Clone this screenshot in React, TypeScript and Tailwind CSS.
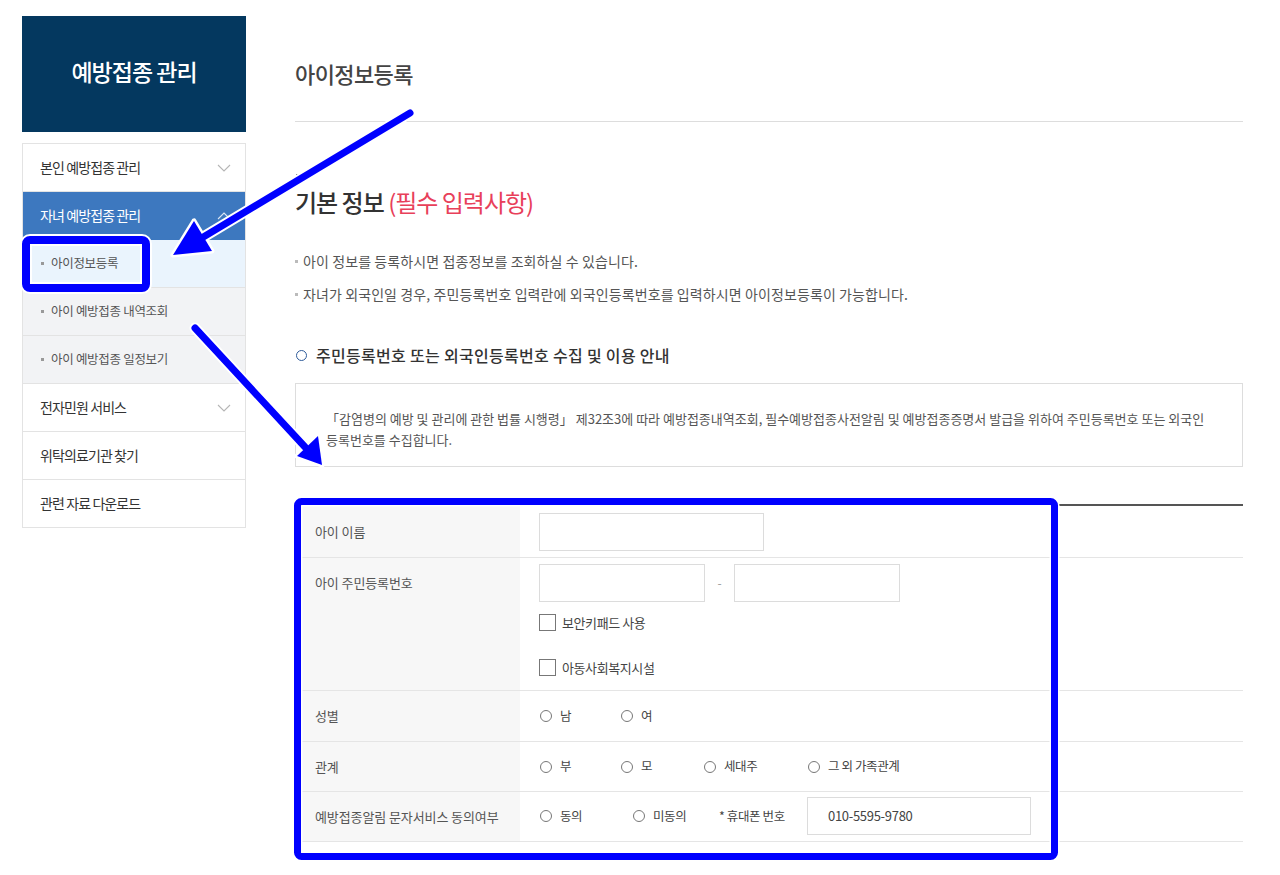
import React from "react";

const font = "font-['Noto_Sans_CJK_KR','Noto_Sans',sans-serif]";

const Chevron = ({ up = false, white = false }: { up?: boolean; white?: boolean }) => (
  <svg width="14" height="8" viewBox="0 0 14 8" className="mr-[14px]">
    <polyline
      points={up ? "1,7 7,1 13,7" : "1,1 7,7 13,1"}
      fill="none"
      stroke={white ? "#dbe6f4" : "#b5b5b5"}
      strokeWidth="1.1"
    />
  </svg>
);

const menu = [
  { label: "본인 예방접종 관리", kind: "main", chevron: "down" },
  { label: "자녀 예방접종 관리", kind: "active", chevron: "up" },
  { label: "아이정보등록", kind: "sub-on" },
  { label: "아이 예방접종 내역조회", kind: "sub" },
  { label: "아이 예방접종 일정보기", kind: "sub" },
  { label: "전자민원 서비스", kind: "main", chevron: "down" },
  { label: "위탁의료기관 찾기", kind: "main" },
  { label: "관련 자료 다운로드", kind: "main" },
];

const Sidebar = () => (
  <aside className="mt-[16px] w-[224px] shrink-0">
    <div className="flex h-[116px] items-center justify-center bg-[#04385f] pb-[5px] text-[23px] font-medium tracking-[-1px] text-white">
      예방접종 관리
    </div>
    <ul className="mt-[11px] border border-[#e3e3e3] border-b-0">
      {menu.map((m) => {
        if (m.kind === "sub" || m.kind === "sub-on") {
          return (
            <li
              key={m.label}
              className={`flex h-[48px] items-center border-b border-[#e3e3e3] pl-[18px] text-[12.5px] tracking-[-0.3px] text-[#555] ${
                m.kind === "sub-on" ? "bg-[#eaf4fd]" : "bg-[#f2f3f5]"
              }`}
            >
              <span className="mr-[7px] inline-block h-[3px] w-[3px] bg-[#999]" />
              {m.label}
            </li>
          );
        }
        const active = m.kind === "active";
        return (
          <li
            key={m.label}
            className={`flex h-[48px] items-center justify-between border-b pl-[17px] text-[14px] tracking-[-0.9px] ${
              active ? "border-[#3d78bf] bg-[#3d78bf] text-white" : "border-[#e3e3e3] bg-white text-[#333]"
            }`}
          >
            <span>{m.label}</span>
            {m.chevron && <Chevron up={m.chevron === "up"} white={active} />}
          </li>
        );
      })}
    </ul>
  </aside>
);

const Radio = ({ label, w }: { label: string; w: string }) => (
  <label className={`flex items-center ${w}`}>
    <span className="inline-block h-[12px] w-[12px] rounded-full border border-[#777] bg-white" />
    <span className="ml-[8px] text-[12.5px] tracking-[-0.4px] text-[#444]">{label}</span>
  </label>
);

const Check = ({ label }: { label: string }) => (
  <label className="flex items-center">
    <span className="inline-block h-[17px] w-[17px] border border-[#777] bg-white" />
    <span className="ml-[6px] text-[13px] tracking-[-0.4px] text-[#444]">{label}</span>
  </label>
);

const Label = ({ children, top = false }: { children: React.ReactNode; top?: boolean }) => (
  <div
    className={`flex bg-[#f7f7f7] pl-[20px] text-[13px] tracking-[-0.1px] text-[#555] ${
      top ? "items-start pt-[15px]" : "items-center"
    }`}
  >
    {children}
  </div>
);

const inputCls = "block h-[38px] border border-[#dcdcdc] bg-white";

const FormTable = () => (
  <div className="mt-[37px] border-t-2 border-[#555]">
    <div className="grid grid-cols-[225px_1fr] border-b border-[#e5e5e5]">
      <Label>아이 이름</Label>
      <div className="pb-[6px] pl-[19px] pt-[7px]">
        <div className={`${inputCls} w-[225px]`} />
      </div>
    </div>
    <div className="grid grid-cols-[225px_1fr] border-b border-[#e5e5e5]">
      <Label top>아이 주민등록번호</Label>
      <div className="pb-[13px] pl-[19px] pt-[6px]">
        <div className="flex items-center">
          <div className={`${inputCls} w-[166px]`} />
          <span className="w-[29px] text-center text-[12px] text-[#999]">-</span>
          <div className={`${inputCls} w-[166px]`} />
        </div>
        <div className="mt-[11px]">
          <Check label="보안키패드 사용" />
        </div>
        <div className="mt-[25px]">
          <Check label="아동사회복지시설" />
        </div>
      </div>
    </div>
    <div className="grid h-[51px] grid-cols-[225px_1fr] border-b border-[#e5e5e5]">
      <Label>성별</Label>
      <div className="flex items-center pl-[20px]">
        <Radio label="남" w="w-[81px]" />
        <Radio label="여" w="w-[81px]" />
      </div>
    </div>
    <div className="grid h-[50px] grid-cols-[225px_1fr] border-b border-[#e5e5e5]">
      <Label>관계</Label>
      <div className="flex items-center pl-[20px]">
        <Radio label="부" w="w-[81px]" />
        <Radio label="모" w="w-[83px]" />
        <Radio label="세대주" w="w-[104px]" />
        <Radio label="그 외 가족관계" w="w-[140px]" />
      </div>
    </div>
    <div className="grid grid-cols-[225px_1fr] border-b border-[#e5e5e5]">
      <Label>예방접종알림 문자서비스 동의여부</Label>
      <div className="flex items-center pb-[6px] pl-[20px] pt-[5px]">
        <Radio label="동의" w="w-[93px]" />
        <Radio label="미동의" w="w-[86px]" />
        <span className="w-[88px] text-[12.5px] tracking-[-0.4px] text-[#444]">* 휴대폰 번호</span>
        <div className={`${inputCls} flex w-[224px] items-center pl-[20px] text-[13px] tracking-[-0.3px] text-[#444]`}>
          010-5595-9780
        </div>
      </div>
    </div>
  </div>
);

const Main = () => (
  <main className="ml-[49px] w-[948px] shrink-0">
    <div className="border-b border-[#ddd] pb-[35px] pt-[60px]">
      <h1 className="text-[22px] font-medium leading-[26px] tracking-[-0.6px] text-[#444]">아이정보등록</h1>
    </div>
    <div className="ml-[1px] mt-[52px] h-[2px] w-[2px] bg-[#777]" />
    <h2 className="mt-[11px] text-[24px] font-medium leading-[30px] tracking-[-1px] text-[#333]">
      기본 정보 <span className="font-normal text-[#e8405a]">(필수 입력사항)</span>
    </h2>
    <ul className="mt-[34px] text-[14px] leading-[20px] tracking-[0.1px] text-[#555]">
      <li className="flex items-center">
        <span className="mr-[5px] inline-block h-[3px] w-[3px] bg-[#bbb]" />
        아이 정보를 등록하시면 접종정보를 조회하실 수 있습니다.
      </li>
      <li className="mt-[13px] flex items-center">
        <span className="mr-[5px] inline-block h-[3px] w-[3px] bg-[#bbb]" />
        자녀가 외국인일 경우, 주민등록번호 입력란에 외국인등록번호를 입력하시면 아이정보등록이 가능합니다.
      </li>
    </ul>
    <h3 className="mt-[40px] flex items-center text-[16px] font-medium leading-[22px] tracking-[0.3px] text-[#333]">
      <span className="mr-[9px] ml-[1px] inline-block h-[11px] w-[11px] rounded-full border-[1.5px] border-[#2e5b9a]" />
      주민등록번호 또는 외국인등록번호 수집 및 이용 안내
    </h3>
    <div className="mt-[17px] border border-[#ddd] pb-[16px] pl-[30px] pr-[20px] pt-[24px] text-[13px] leading-[21px] text-[#555]">
      「감염병의 예방 및 관리에 관한 법률 시행령」 제32조3에 따라 예방접종내역조회, 필수예방접종사전알림 및 예방접종증명서 발급을 위하여 주민등록번호 또는 외국인
      <br />
      등록번호를 수집합니다.
    </div>
    <FormTable />
  </main>
);

const Annotations = () => (
  <svg className="pointer-events-none absolute left-0 top-0" width="1280" height="875" viewBox="0 0 1280 875">
    {/* sidebar highlight */}
    <rect x="26" y="240" width="120" height="48" rx="4" fill="none" stroke="#fff" strokeWidth="12" />
    <rect x="26" y="240" width="120" height="48" rx="4" fill="none" stroke="#0000ff" strokeWidth="8" />
    {/* form highlight */}
    <rect x="297.5" y="501.5" width="757" height="355" rx="4" fill="none" stroke="#fff" strokeWidth="10" />
    <rect x="297.5" y="501.5" width="757" height="355" rx="4" fill="none" stroke="#0000ff" strokeWidth="7" />
    {/* arrow 1 */}
    <line x1="410" y1="113" x2="200" y2="239" stroke="#fff" strokeWidth="11" strokeLinecap="round" />
    <polygon points="173,255 212,251 194,221" fill="#fff" stroke="#fff" strokeWidth="5" strokeLinejoin="round" />
    <line x1="410" y1="113" x2="200" y2="239" stroke="#0000ff" strokeWidth="7" strokeLinecap="round" />
    <polygon points="173,255 212,251 194,221" fill="#0000ff" />
    {/* arrow 2 */}
    <line x1="195" y1="328" x2="305" y2="447" stroke="#fff" strokeWidth="11" strokeLinecap="round" />
    <polygon points="322,465 297,456 318,436" fill="#fff" stroke="#fff" strokeWidth="5" strokeLinejoin="round" />
    <line x1="195" y1="328" x2="305" y2="447" stroke="#0000ff" strokeWidth="7" strokeLinecap="round" />
    <polygon points="322,465 297,456 318,436" fill="#0000ff" />
  </svg>
);

export default function App() {
  return (
    <div className={`relative flex h-[875px] w-[1280px] items-start overflow-hidden bg-white pl-[22px] ${font}`}>
      <Sidebar />
      <Main />
      <Annotations />
    </div>
  );
}
